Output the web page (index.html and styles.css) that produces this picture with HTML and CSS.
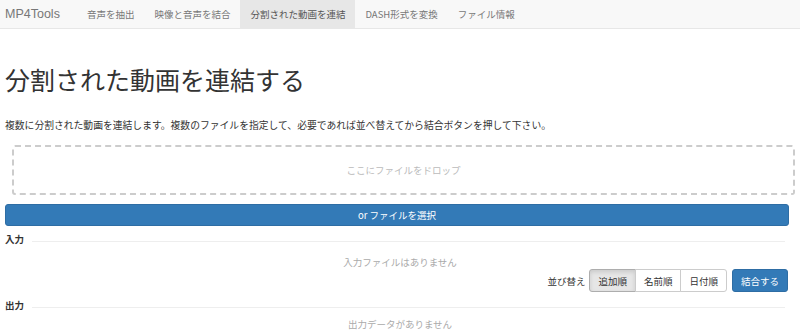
FILE: index.html
```html
<!DOCTYPE html>
<html lang="ja">
<head>
  <meta charset="UTF-8">
  <title>MP4Tools - 分割された動画を連結</title>
  <link rel="stylesheet" href="styles.css">
</head>
<body>
  <nav class="navbar">
    <a class="brand" href="#">MP4Tools</a>
    <ul class="nav">
      <li><a href="#">音声を抽出</a></li>
      <li><a href="#">映像と音声を結合</a></li>
      <li class="active"><a href="#">分割された動画を連結</a></li>
      <li><a href="#">DASH形式を変換</a></li>
      <li><a href="#">ファイル情報</a></li>
    </ul>
  </nav>
  <div class="main">
    <h1>分割された動画を連結する</h1>
    <p class="lead">複数に分割された動画を連結します。複数のファイルを指定して、必要であれば並べ替えてから結合ボタンを押して下さい。</p>
    <div class="dropzone">ここにファイルをドロップ</div>
    <button class="btn-select">or ファイルを選択</button>
    <div class="section-title input-title"><span>入力</span><hr></div>
    <div class="empty input-empty">入力ファイルはありません</div>
    <div class="toolbar">
      <span class="sort-label">並び替え</span>
      <div class="btn-group">
        <button class="btn active">追加順</button>
        <button class="btn">名前順</button>
        <button class="btn">日付順</button>
      </div>
      <button class="btn-join">結合する</button>
    </div>
    <div class="section-title output-title"><span>出力</span><hr></div>
    <div class="empty output-empty">出力データがありません</div>
  </div>
</body>
</html>
```

FILE: styles.css
```css
body {
  margin: 0;
  font-family: "Noto Sans CJK JP", "Liberation Sans", sans-serif;
  font-size: 9.5px;
  color: #333;
  background: #fff;
}
.navbar {
  display: flex;
  align-items: stretch;
  height: 28px;
  background-color: #f8f8f8;
  border-bottom: 1px solid #e7e7e7;
}
.brand {
  padding: 0 17px 0 5px;
  line-height: 28px;
  font-family: "Liberation Sans", sans-serif;
  font-size: 12.5px;
  color: #777;
  text-decoration: none;
}
.nav {
  display: flex;
  list-style: none;
  margin: 0;
  padding: 0;
}
.nav a {
  display: block;
  padding: 0 10px;
  line-height: 28px;
  font-size: 9.5px;
  color: #777;
  text-decoration: none;
}
.nav .active a {
  background-color: #e7e7e7;
  color: #555;
}
.main {
  padding: 0 5px;
}
h1 {
  margin: 32px 0 0;
  font-size: 25px;
  font-weight: 400;
  line-height: 36px;
  color: #333;
}
.lead {
  margin: 20px 0 0;
  font-size: 9.8px;
  line-height: 16px;
}
.dropzone {
  margin: 12px 0 0 7px;
  height: 46px;
  line-height: 46px;
  border: 2px dashed #ccc;
  border-radius: 3px;
  text-align: center;
  color: #bbb;
}
.btn-select {
  display: block;
  width: calc(100% - 6px);
  margin-top: 9px;
  height: 22px;
  border: 1px solid #2e6da4;
  border-radius: 3px;
  background-color: #337ab7;
  color: #fff;
  font-family: inherit;
  font-size: 9.5px;
}
.section-title {
  display: flex;
  align-items: center;
  height: 16px;
}
.input-title {
  margin-top: 5px;
}
.output-title {
  margin-top: 5px;
}
.section-title span {
  font-weight: 700;
  padding-right: 8px;
}
.section-title hr {
  flex: 1;
  margin: 4px 10px 0 0;
  border: 0;
  border-top: 1px solid #eee;
}
.empty {
  text-align: center;
  color: #aaa;
  line-height: 16px;
}
.input-empty {
  margin-top: 7px;
}
.output-empty {
  margin-top: 3px;
}
.toolbar {
  display: flex;
  justify-content: flex-end;
  align-items: center;
  margin-top: -1px;
  padding-right: 7px;
}
.sort-label {
  margin-right: 4px;
}
.btn-group {
  display: flex;
  margin-right: 5px;
}
.btn, .btn-join {
  height: 23px;
  padding: 0 8px;
  font-family: inherit;
  font-size: 9.5px;
  border-radius: 3px;
}
.btn {
  border: 1px solid #ccc;
  background: #fff;
  color: #333;
}
.btn-group .btn {
  border-radius: 0;
  margin-left: -1px;
}
.btn-group .btn:first-child {
  border-radius: 3px 0 0 3px;
  margin-left: 0;
}
.btn-group .btn:last-child {
  border-radius: 0 3px 3px 0;
}
.btn.active {
  background: #e6e6e6;
  border-color: #adadad;
  box-shadow: inset 0 2px 4px rgba(0, 0, 0, 0.125);
}
.btn-join {
  border: 1px solid #2e6da4;
  background-color: #337ab7;
  color: #fff;
}
```
